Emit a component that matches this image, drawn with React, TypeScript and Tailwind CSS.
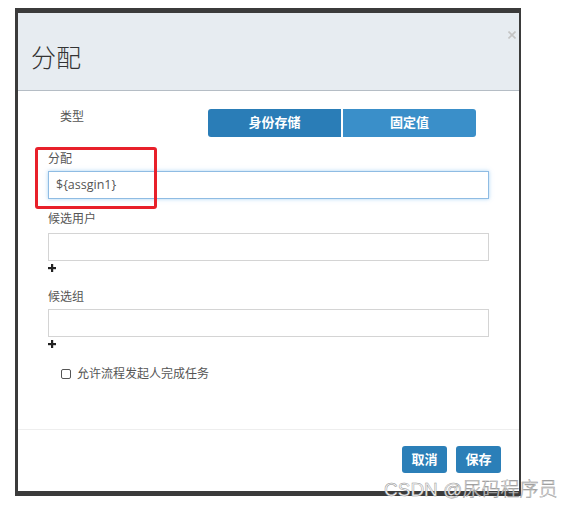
import React from "react";

const Plus = () => (
  <svg width="8" height="8" viewBox="0 0 8 8" className="block">
    <rect x="0" y="3" width="8" height="2.2" fill="#222" />
    <rect x="3" y="0" width="2.2" height="8" fill="#222" />
  </svg>
);

export default function App() {
  return (
    <div className="relative w-[571px] h-[509px] bg-white font-['Noto_Sans','Noto_Sans_CJK_SC',sans-serif] overflow-hidden">
      <div className="ml-[15px] mt-[8px] w-[506px] h-[488px] border-t-[5px] border-b-[5px] border-l-[3px] border-r-[2px] border-[#3b3b3b]">
        <div className="flex flex-col h-full bg-white">
          {/* header */}
          <div className="relative h-[78px] shrink-0 bg-[#e7ecf1] border-b border-[#b5bdc5] pl-[13px] pt-[28px]">
            <div className="text-[25px] leading-[32px] text-[#333] font-light">分配</div>
            <svg width="8" height="8" viewBox="0 0 8 8" className="absolute right-[3px] top-[18px]">
              <path d="M0.5 0.5 L7.5 7.5 M7.5 0.5 L0.5 7.5" stroke="#c4c4c4" strokeWidth="1.6" />
            </svg>
          </div>

          {/* body */}
          <div className="relative h-[338px] shrink-0 px-[30px] pt-[18px]">
            <div className="flex h-[28px]">
              <div className="w-[160px] pl-[12px] text-[12px] leading-[16px] text-[#555]">类型</div>
              <div className="flex gap-[2px]">
                <div className="w-[133px] h-[28px] rounded-l-[3px] bg-[#2a7db7] flex items-center justify-center text-white text-[13px] font-bold">
                  身份存储
                </div>
                <div className="w-[133px] h-[28px] rounded-r-[3px] bg-[#3a8fc9] flex items-center justify-center text-white text-[13px] font-bold">
                  固定值
                </div>
              </div>
            </div>

            <div className="mt-[14px] text-[12px] leading-[16px] text-[#555]">分配</div>
            <div className="mt-[4px] h-[28px] border border-[#8fbce3] shadow-[0_0_4px_rgba(102,175,233,0.55)] flex items-center pl-[7px] text-[12.5px] text-[#555] font-['Open_Sans',sans-serif]">
              {"${assgin1}"}
            </div>

            <div className="mt-[12px] text-[12px] leading-[16px] text-[#555]">候选用户</div>
            <div className="mt-[6px] h-[28px] border border-[#d4d4d4]" />
            <div className="mt-[3px]">
              <Plus />
            </div>

            <div className="mt-[17px] text-[12px] leading-[16px] text-[#555]">候选组</div>
            <div className="mt-[4px] h-[28px] border border-[#d4d4d4]" />
            <div className="mt-[3px]">
              <Plus />
            </div>

            <div className="mt-[18px] flex items-center h-[16px] pl-[13px]">
              <div className="w-[10px] h-[10px] border border-[#555] rounded-[2px] bg-white" />
              <span className="ml-[6px] text-[12px] leading-[16px] text-[#555]">允许流程发起人完成任务</span>
            </div>

            <div className="absolute left-[17px] top-[56px] w-[122px] h-[62px] border-[3px] border-[#e8202a] rounded-[3px]" />
          </div>

          {/* footer */}
          <div className="flex-1 border-t border-[#eeeeee] flex justify-end gap-[9px] pr-[18px] pt-[16px]">
            <div className="w-[45px] h-[27px] rounded-[3px] bg-[#2b7fb8] flex items-center justify-center text-white text-[13px] font-bold">
              取消
            </div>
            <div className="w-[45px] h-[27px] rounded-[3px] bg-[#2b7fb8] flex items-center justify-center text-white text-[13px] font-bold">
              保存
            </div>
          </div>
        </div>
      </div>

      <div className="absolute left-[384px] top-[479px] text-[19px] leading-[22px] whitespace-nowrap text-[#fafafa] [-webkit-text-stroke:0.45px_#8f8f8f] font-light font-['Liberation_Sans','Noto_Sans_CJK_SC',sans-serif]">
        CSDN @尿码程序员
      </div>
    </div>
  );
}
